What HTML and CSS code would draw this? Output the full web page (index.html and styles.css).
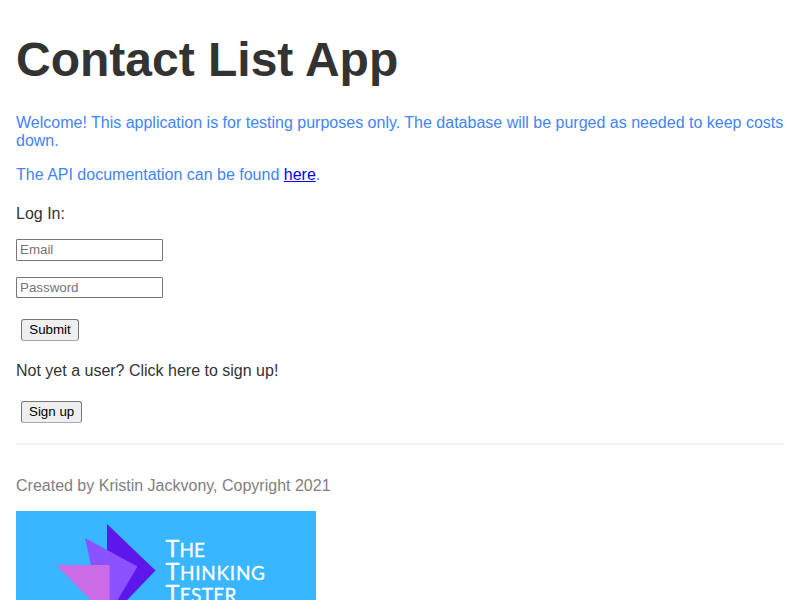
FILE: index.html
```html
<!DOCTYPE html>
<html lang="en">
<head>
<meta charset="utf-8">
<title>Contact List App</title>
<link rel="stylesheet" href="styles.css">
</head>
<body>
<div class="main-content">
<h1>Contact List App</h1>
<div class="welcome-message">
<p>Welcome! This application is for testing purposes only. The database will be purged as needed to keep costs down.</p>
<p>The API documentation can be found <a href="#">here</a>.</p>
</div>
<form>
<p class="login">Log In:</p>
<p class="field"><input type="text" placeholder="Email"></p>
<p class="field"><input class="password" type="password" placeholder="Password"></p>
<p class="action submit"><button type="button">Submit</button></p>
</form>
<p class="signup">Not yet a user? Click here to sign up!</p>
<p class="action"><button type="button">Sign up</button></p>
</div>
<footer>
<p>Created by Kristin Jackvony, Copyright 2021</p>
<svg class="logo" width="300" height="150" viewBox="0 0 300 150">
<rect width="300" height="150" fill="#38b6ff"/>
<path d="M91 13L139.500 59.500L91 110Z" fill="#5e17eb"/>
<path d="M69 27L121.500 55.500L88 112Z" fill="#8c52ff"/>
<path d="M40 54H93.500V108Z" fill="#cb6ce6"/>
<g class="logo-text"><text x="149.500" y="45.500" textLength="39.500">T<tspan class="small">HE</tspan></text><text x="149.500" y="68.500" textLength="99.500">T<tspan class="small">HINKING</tspan></text><text x="149.500" y="91" textLength="71">T<tspan class="small">ESTER</tspan></text></g>
</svg>
</footer>
</body>
</html>
```
FILE: styles.css
```css
body { margin: 0; padding: 0 16px; font-family: "Liberation Sans", Arial, sans-serif; font-size: 16px; line-height: 18px; color: #333; height: 600px; overflow: hidden; box-sizing: border-box; }
h1 { margin: 33px 0 27px; font-size: 48px; line-height: 54px; }
p { margin: 16px 0; }
.welcome-message { color: #4285f4; }
a { color: #0000ee; }
.login { margin: 21px 0 16px; }
.field { height: 22px; }
input { display: block; box-sizing: border-box; width: 147px; height: 22px; padding: 0 3px 2px; border: 1px solid #767676; border-radius: 1px; font: 13.333px "Liberation Sans", sans-serif; }
.password { height: 21px; padding-bottom: 1px; }
.action { margin: 21px 5px 20px; }
.submit { margin: 20px 5px 21px; }
button { display: block; box-sizing: border-box; height: 22px; padding: 0 7px 1px; border: 1px solid #767676; border-bottom-color: #aaa; border-radius: 3px; background: #efefef; color: #000; font: 13.333px "Liberation Sans", sans-serif; }
.submit button { width: 58px; padding: 0 0 1px; }
footer { margin-top: 20px; padding-top: 32px; border-top: 2px solid #f3f3f3; color: #808080; }
footer p { margin: 0 0 16px; }
.logo { display: block; }
.logo-text { fill: #fff; stroke: #fff; stroke-width: 0.3px; font-family: Lato, sans-serif; font-size: 23.5px; }
.small { font-size: 19px; }
```
